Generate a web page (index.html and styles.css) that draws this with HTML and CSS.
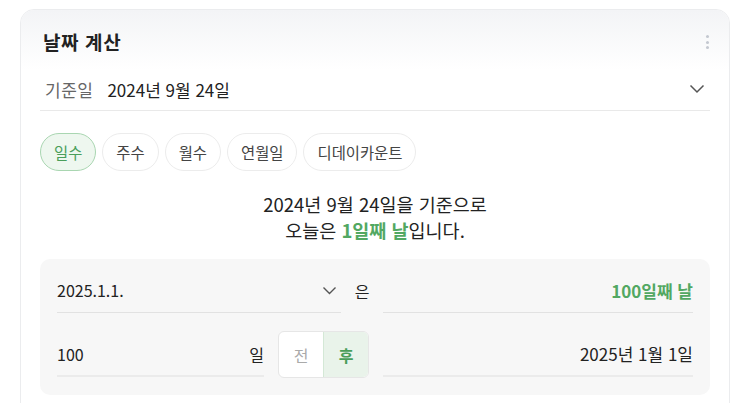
FILE: index.html
```html
<!DOCTYPE html>
<html lang="ko">
<head>
<meta charset="utf-8">
<title>날짜 계산</title>
<link rel="stylesheet" href="styles.css">
</head>
<body>
<div class="card">
  <div class="card-head">
    <h2 class="title">날짜 계산</h2>
    <span class="kebab"><i></i><i></i><i></i></span>
  </div>
  <div class="card-body">
    <div class="base-row">
      <span class="base-label">기준일</span>
      <span class="base-date">2024년 9월 24일</span>
      <svg class="chev" width="16" height="10" viewBox="0 0 16 10"><path d="M1.5 1.5 L8 8 L14.5 1.5" fill="none" stroke="#555" stroke-width="1.5"/></svg>
    </div>
    <div class="tabs">
      <span class="tab active">일수</span>
      <span class="tab">주수</span>
      <span class="tab">월수</span>
      <span class="tab">연월일</span>
      <span class="tab">디데이카운트</span>
    </div>
    <p class="summary">2024년 9월 24일을 기준으로<br>오늘은 <b class="green">1일째 날</b>입니다.</p>
    <div class="panel">
      <div class="prow">
        <div class="field f-date">
          <span>2025.1.1.</span>
          <svg class="chev-s" width="15" height="9" viewBox="0 0 15 9"><path d="M1.5 1.5 L7.5 7.5 L13.5 1.5" fill="none" stroke="#555" stroke-width="1.4"/></svg>
        </div>
        <span class="eun">은</span>
        <div class="field f-out"><b class="green">100일째 날</b></div>
      </div>
      <div class="prow">
        <div class="field f-num thick">
          <span>100</span>
          <span>일</span>
        </div>
        <div class="seg">
          <span class="seg-btn">전</span>
          <span class="seg-btn on">후</span>
        </div>
        <div class="field f-out thick"><span>2025년 1월 1일</span></div>
      </div>
    </div>
  </div>
</div>
</body>
</html>
```

FILE: styles.css
```css
* { box-sizing: border-box; }
html, body { margin: 0; padding: 0; background: #fff; }
body {
  font-family: "Noto Sans CJK KR", "Noto Sans", sans-serif;
  color: #222;
  padding: 9px 13px 0 20px;
  height: 403px;
  overflow: hidden;
}
.card {
  width: 710px;
  height: 420px;
  border: 1px solid #ebecee;
  border-radius: 14px;
  background: #fff;
  overflow: hidden;
}
.card-head {
  height: 60px;
  padding: 0 20px 0 22px;
  display: flex;
  align-items: center;
  justify-content: space-between;
  background: linear-gradient(#f3f4f6, #ffffff);
}
.title {
  margin: 0;
  font-size: 19px;
  font-weight: 700;
  color: #222;
  letter-spacing: 0.6px;
  padding-top: 2px;
}
.kebab {
  display: flex;
  flex-direction: column;
  gap: 2.5px;
  padding-top: 4px;
}
.kebab i {
  display: block;
  width: 3px;
  height: 3px;
  border-radius: 50%;
  background: #c4c8d0;
}
.card-body { padding: 0 19px 0 19px; }
.base-row {
  height: 41px;
  display: flex;
  align-items: center;
  border-bottom: 1px solid #e9e9e9;
  padding: 0 5px 2px 5px;
  font-size: 17px;
}
.base-label { color: #666; margin-right: 14px; letter-spacing: 0.5px; }
.base-date { color: #222; flex: 1; }
.tabs {
  display: flex;
  gap: 6px;
  margin-top: 22px;
}
.tab {
  height: 38px;
  padding: 0 13px;
  border: 1px solid #ececec;
  border-radius: 19px;
  display: flex;
  align-items: center;
  font-size: 15.4px;
  color: #444;
  background: #fff;
}
.tab.active {
  background: #eef7ef;
  border-color: #a9d6b1;
  color: #4a9e5a;
}
.summary {
  margin: 20px 0 0;
  text-align: center;
  font-size: 18.5px;
  line-height: 26px;
  color: #222;
}
.green { color: #52a862; font-weight: 700; }
.panel {
  margin-top: 16px;
  background: #f7f7f7;
  border-radius: 10px;
  padding: 9px 17px 19px;
  height: 136px;
}
.prow { display: flex; align-items: center; }
.prow + .prow { margin-top: 18px; }
.field {
  height: 45px;
  display: flex;
  align-items: center;
  font-size: 16px;
  color: #222;
  border-bottom: 1px solid #e2e2e2;
}
.field.thick { border-bottom: 2px solid #ebebeb; }
.f-date { width: 284px; justify-content: space-between; padding-right: 4px; }
.eun { width: 42px; text-align: center; font-size: 16px; }
.f-out { flex: 1; justify-content: flex-end; }
.f-out .green { font-size: 17px; }
.f-out span { font-size: 17px; }
.f-num { width: 207px; justify-content: space-between; }
.seg {
  margin: 0 14px;
  width: 91px;
  height: 47px;
  display: flex;
  border: 1px solid #e6e6e6;
  border-radius: 6px;
  overflow: hidden;
  background: #fff;
}
.seg-btn {
  flex: 1;
  display: flex;
  align-items: center;
  justify-content: center;
  font-size: 16px;
  color: #aaa;
}
.seg-btn.on {
  background: #e9f3ea;
  border-left: 1px solid #d4e8d6;
  color: #4a9e5a;
  font-weight: 700;
}
```
